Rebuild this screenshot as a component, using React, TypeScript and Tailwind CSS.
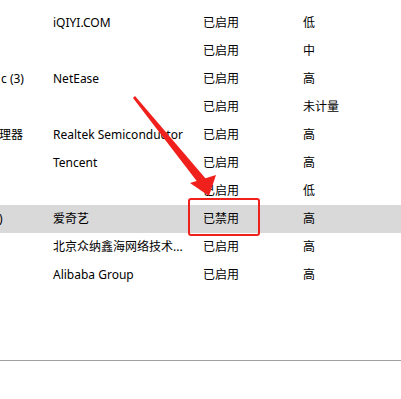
const rows = [
  { lead: "", name: "iQIYI.COM", status: "已启用", impact: "低" },
  { lead: "", name: "", status: "已启用", impact: "中" },
  { lead: "c (3)", name: "NetEase", status: "已启用", impact: "高" },
  { lead: "", name: "", status: "已启用", impact: "未计量" },
  { lead: "管理器", name: "Realtek Semiconductor", status: "已启用", impact: "高" },
  { lead: "", name: "Tencent", status: "已启用", impact: "高" },
  { lead: "", name: "", status: "已启用", impact: "低" },
  { lead: ")", name: "爱奇艺", status: "已禁用", impact: "高", selected: true },
  { lead: "", name: "北京众纳鑫海网络技术...", status: "已启用", impact: "高" },
  { lead: "", name: "Alibaba Group", status: "已启用", impact: "高" },
];

export default function App() {
  return (
    <div
      className="relative w-[401px] h-[399px] bg-white overflow-hidden text-[12px] text-black"
      style={{ fontFamily: '"Segoe UI", "Noto Sans", "Noto Sans CJK SC", sans-serif' }}
    >
      <div className="pt-[9px]">
        {rows.map((r, i) => (
          <div
            key={i}
            className={`grid grid-cols-[53px_150px_100px_1fr] h-[28px] items-center whitespace-nowrap ${
              r.selected ? "bg-[#d9d9d9]" : ""
            }`}
          >
            <div className="overflow-hidden">
              <span
                className={`block ${
                  r.lead === "管理器" ? "-ml-[13px]" : r.lead === ")" ? "-ml-[1px]" : "ml-[1px]"
                }`}
              >
                {r.lead}
              </span>
            </div>
            <div>{r.name}</div>
            <div>{r.status}</div>
            <div>{r.impact}</div>
          </div>
        ))}
      </div>

      {/* bottom divider */}
      <div className="mt-[71px] h-px bg-[#a0a0a0]" />

      {/* red highlight box */}
      <div className="absolute left-[188px] top-[198px] w-[72px] h-[38px] border-2 border-[#f0201c] rounded-[3px]" />

      {/* annotation arrow */}
      <svg className="absolute left-0 top-0" width="401" height="399">
        <polygon points="133,98 135,96 206,179 199,184" fill="#f0201c" />
        <polygon points="190,183 216,175 209,196" fill="#f0201c" />
      </svg>
    </div>
  );
}
